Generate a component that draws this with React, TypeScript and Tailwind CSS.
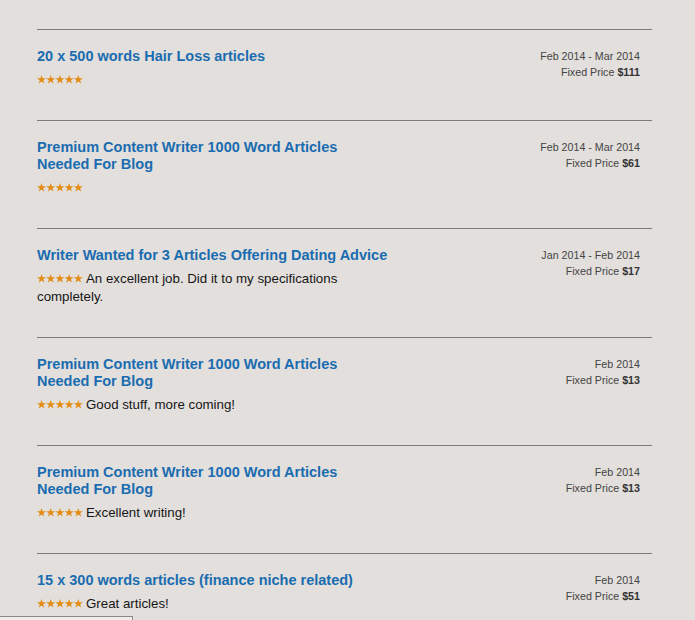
const JOBS = [
  { title: '20 x 500 words Hair Loss articles', date: 'Feb 2014 - Mar 2014', price: '$111', comment: '' },
  { title: 'Premium Content Writer 1000 Word Articles Needed For Blog', date: 'Feb 2014 - Mar 2014', price: '$61', comment: '' },
  { title: 'Writer Wanted for 3 Articles Offering Dating Advice', date: 'Jan 2014 - Feb 2014', price: '$17', comment: 'An excellent job. Did it to my specifications completely.' },
  { title: 'Premium Content Writer 1000 Word Articles Needed For Blog', date: 'Feb 2014', price: '$13', comment: 'Good stuff, more coming!' },
  { title: 'Premium Content Writer 1000 Word Articles Needed For Blog', date: 'Feb 2014', price: '$13', comment: 'Excellent writing!' },
  { title: '15 x 300 words articles (finance niche related)', date: 'Feb 2014', price: '$51', comment: 'Great articles!' },
];

function Stars() {
  const star = 'M4.5 0 L5.6 3.2 L9 3.3 L6.3 5.3 L7.3 8.6 L4.5 6.6 L1.7 8.6 L2.7 5.3 L0 3.3 L3.4 3.2 Z';
  return (
    <svg width="46" height="9" viewBox="0 0 46 9" className="inline-block align-[0px] mr-[3px]">
      {[0, 9.2, 18.4, 27.6, 36.8].map(x => (
        <path key={x} d={star} transform={`translate(${x} 0)`} fill="#e38b12" />
      ))}
    </svg>
  );
}

export default function App() {
  return (
    <div className="relative w-[695px] h-[620px] overflow-hidden bg-[#e2dfdc] font-['Liberation_Sans',Arial,sans-serif]">
      <div className="pt-[29px] ml-[37px] w-[615px]">
        {JOBS.map((job, i) => (
          <div key={i} className="border-t border-[#7f7b78] pt-[18px] pb-[31px] flex justify-between">
            <div className="w-[353px]">
              <div className="text-[14.5px] leading-[17px] font-bold text-[#1a6cb0]">{job.title}</div>
              <div className="mt-[6px] text-[13.3px] leading-[18px] text-[#161616]">
                <Stars />
                {job.comment}
              </div>
            </div>
            <div className="pr-[12px] text-right text-[10.7px] leading-[16px] text-[#444]">
              <div>{job.date}</div>
              <div>Fixed Price <span className="font-bold text-[#333]">{job.price}</span></div>
            </div>
          </div>
        ))}
      </div>
      <div className="absolute left-0 bottom-0 w-[133px] h-[4px] border-t border-r border-[#8a8784] bg-[#efece9]" />
    </div>
  );
}
